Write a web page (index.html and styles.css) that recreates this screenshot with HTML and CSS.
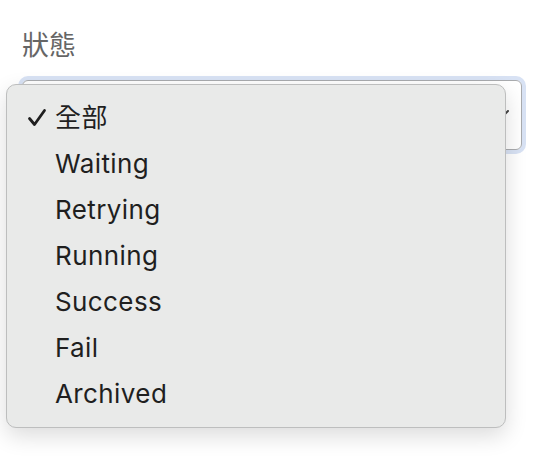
FILE: index.html
```html
<!DOCTYPE html>
<html lang="zh-Hant">
<head>
    <meta charset="UTF-8">
    <title>狀態</title>
    <link rel="stylesheet" href="styles.css">
</head>
<body>
    <div class="field">
        <div class="label">狀態</div>
        <div class="selectBox">
            <span class="chevron">
                <svg width="16" height="10" viewBox="0 0 16 10"><path d="M1 1 L8 8 L15 1" fill="none" stroke="#444" stroke-width="2" stroke-linecap="round"/></svg>
            </span>
        </div>
        <ul class="menu">
            <li class="item">
                <svg class="check" width="20" height="20" viewBox="0 0 20 20"><path d="M2.5 10.5 L7.5 16.5 L17.5 2.5" fill="none" stroke="#1f1f1f" stroke-width="2.8" stroke-linecap="round" stroke-linejoin="round"/></svg>全部
            </li>
            <li class="item">Waiting</li>
            <li class="item">Retrying</li>
            <li class="item">Running</li>
            <li class="item">Success</li>
            <li class="item">Fail</li>
            <li class="item">Archived</li>
        </ul>
    </div>
</body>
</html>
```
FILE: styles.css
```css
body {
    margin: 0;
    background: #fff;
    font-family: Inter, "Noto Sans CJK TC", sans-serif;
}
.field {
    position: relative;
    min-height: 456px;
    box-sizing: border-box;
    padding: 28px 14px 0 22px;
}
.label {
    font-size: 27px;
    line-height: 32px;
    color: #666;
    font-family: "Noto Sans CJK TC", sans-serif;
}
.selectBox {
    margin-top: 20px;
    height: 68px;
    border: 1px solid #a9abae;
    border-radius: 6px;
    box-shadow: 0 0 0 4px #d8e2f4;
    display: flex;
    justify-content: flex-end;
    align-items: center;
    padding-right: 12px;
}
.chevron {
    display: flex;
}
.menu {
    position: absolute;
    top: 84px;
    left: 6px;
    width: 500px;
    margin: 0;
    padding: 10px 0;
    list-style: none;
    box-sizing: border-box;
    background: #e9eae9;
    border: 1px solid #bdbebe;
    border-radius: 10px;
    box-shadow: 0 8px 22px rgba(0, 0, 0, 0.14);
}
.item {
    height: 46px;
    line-height: 46px;
    padding-left: 48px;
    font-size: 26px;
    letter-spacing: 0.4px;
    color: #1f1f1f;
    position: relative;
}
.check {
    position: absolute;
    left: 20px;
    top: 13px;
}
```
